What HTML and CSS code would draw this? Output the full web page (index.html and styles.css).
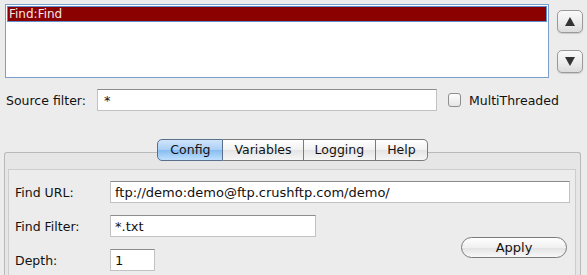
FILE: index.html
```html
<!DOCTYPE html>
<html lang="en">
<head>
    <meta charset="UTF-8">
    <title>Find task</title>
    <link rel="stylesheet" href="styles.css">
</head>
<body>
    <div class="top">
        <div class="list">
            <div class="item selected">Find:Find</div>
        </div>
        <div class="arrows">
            <button class="arrow"><span class="tri up"></span></button>
            <button class="arrow"><span class="tri down"></span></button>
        </div>
    </div>

    <div class="source">
        <span class="source-label">Source filter:</span>
        <input class="field source-field" type="text" value="*">
        <label class="check"><span class="box"></span>MultiThreaded</label>
    </div>

    <div class="tabs">
        <span class="tab active">Config</span><span class="tab">Variables</span><span class="tab">Logging</span><span class="tab last">Help</span>
    </div>

    <div class="panel">
        <div class="panel-body">
            <div class="row">
                <span class="label">Find URL:</span>
                <input class="field url-field" type="text" value="ftp://demo:demo@ftp.crushftp.com/demo/">
            </div>
            <div class="lower">
                <div class="left">
                    <div class="row">
                        <span class="label">Find Filter:</span>
                        <input class="field filter-field" type="text" value="*.txt">
                    </div>
                    <div class="row">
                        <span class="label">Depth:</span>
                        <input class="field depth-field" type="text" value="1">
                    </div>
                </div>
                <button class="apply">Apply</button>
            </div>
        </div>
    </div>
</body>
</html>
```

FILE: styles.css
```css
html, body {
    margin: 0;
    background: #ececec;
    font-family: "DejaVu Sans", sans-serif;
    font-size: 12px;
    color: #111;
    width: 587px;
    height: 275px;
    overflow: hidden;
}

.top {
    display: flex;
    padding: 4px 0 0 5px;
}

.list {
    width: 540px;
    height: 70px;
    border: 1px solid #7d9ec9;
    background: #fff;
    padding: 1px;
}

.item {
    height: 14px;
    line-height: 14px;
    padding-left: 1px;
    color: #f4e6e6;
}
.item.selected {
    background: #8b0000;
    border: 1px solid #5d8fd0;
}

.arrows {
    display: flex;
    flex-direction: column;
    gap: 17px;
    margin: 6px 0 0 8px;
}

.arrow {
    width: 26px;
    height: 23px;
    padding: 0;
    border: 1px solid #9a9a9a;
    border-radius: 5px;
    background: linear-gradient(#fafafa, #ececec 55%, #dcdcdc);
    box-shadow: 0 1px 1px rgba(0, 0, 0, 0.15);
    display: flex;
    align-items: center;
    justify-content: center;
}

.tri {
    width: 0;
    height: 0;
    border-left: 5px solid transparent;
    border-right: 5px solid transparent;
}
.tri.up {
    border-bottom: 9px solid #333;
}
.tri.down {
    border-top: 9px solid #333;
}

.source {
    display: flex;
    align-items: center;
    margin-top: 11px;
    padding-left: 6px;
    height: 22px;
    font-size: 12.5px;
}

.source-label {
    width: 91px;
}

.field {
    box-sizing: border-box;
    height: 22px;
    margin: 0;
    padding: 0 4px;
    border: 1px solid #c2c2c2;
    border-top-color: #8c8c8c;
    background: #fff;
    font-family: "DejaVu Sans", sans-serif;
    font-size: 13px;
    color: #111;
    outline: none;
}

.source-field {
    width: 340px;
    padding-left: 6px;
}

.check {
    display: flex;
    align-items: center;
    margin-left: 11px;
}

.box {
    box-sizing: border-box;
    width: 13px;
    height: 14px;
    border: 1px solid #8e8e8e;
    border-radius: 3px;
    background: linear-gradient(#fdfdfd, #e6e6e6);
    margin-right: 8px;
}

.tabs {
    display: flex;
    justify-content: center;
    margin: 28px 0 -9px 0;
    position: relative;
    z-index: 1;
    padding-right: 2px;
}

.tab {
    height: 20px;
    line-height: 20px;
    padding: 0 11px;
    border: 1px solid #7a7a7a;
    border-left: none;
    background: linear-gradient(#ffffff, #f1f1f1 50%, #e4e4e4 51%, #f6f6f6);
    font-size: 12.5px;
}
.tab.active {
    border-left: 1px solid #5a6f8c;
    border-color: #5a6f8c;
    border-radius: 5px 0 0 5px;
    background: linear-gradient(#cfe4fb, #a9cff6 50%, #86bcf2 51%, #bfe0fd);
    padding: 0 12px;
}
.tab.last {
    border-radius: 0 5px 5px 0;
}

.panel {
    margin: 0 6px 0 4px;
    height: 106px;
    border: 1px solid #b9b9b9;
    border-bottom: none;
    border-radius: 3px 3px 0 0;
    background: #e6e6e6;
    padding: 16px 4px 0 3px;
}

.panel-body {
    height: 94px;
    border: 1px solid #cdcdcd;
    border-bottom: none;
    background: #ececec;
    padding: 11px 5px 0 6px;
    font-size: 12.5px;
}

.row {
    display: flex;
    align-items: center;
    height: 22px;
    margin-bottom: 12px;
}

.label {
    width: 95px;
}

.url-field {
    width: 460px;
}

.filter-field {
    width: 206px;
}

.depth-field {
    width: 45px;
}

.lower {
    display: flex;
}

.left {
    width: 326px;
}

.apply {
    margin: 22px 3px 0 auto;
    width: 106px;
    height: 21px;
    border: 1px solid #7a7a7a;
    border-radius: 11px;
    background: linear-gradient(#ffffff, #f0f0f0 50%, #e2e2e2 51%, #f8f8f8);
    font-family: "DejaVu Sans", sans-serif;
    font-size: 13px;
    color: #111;
    padding: 0;
}
```
